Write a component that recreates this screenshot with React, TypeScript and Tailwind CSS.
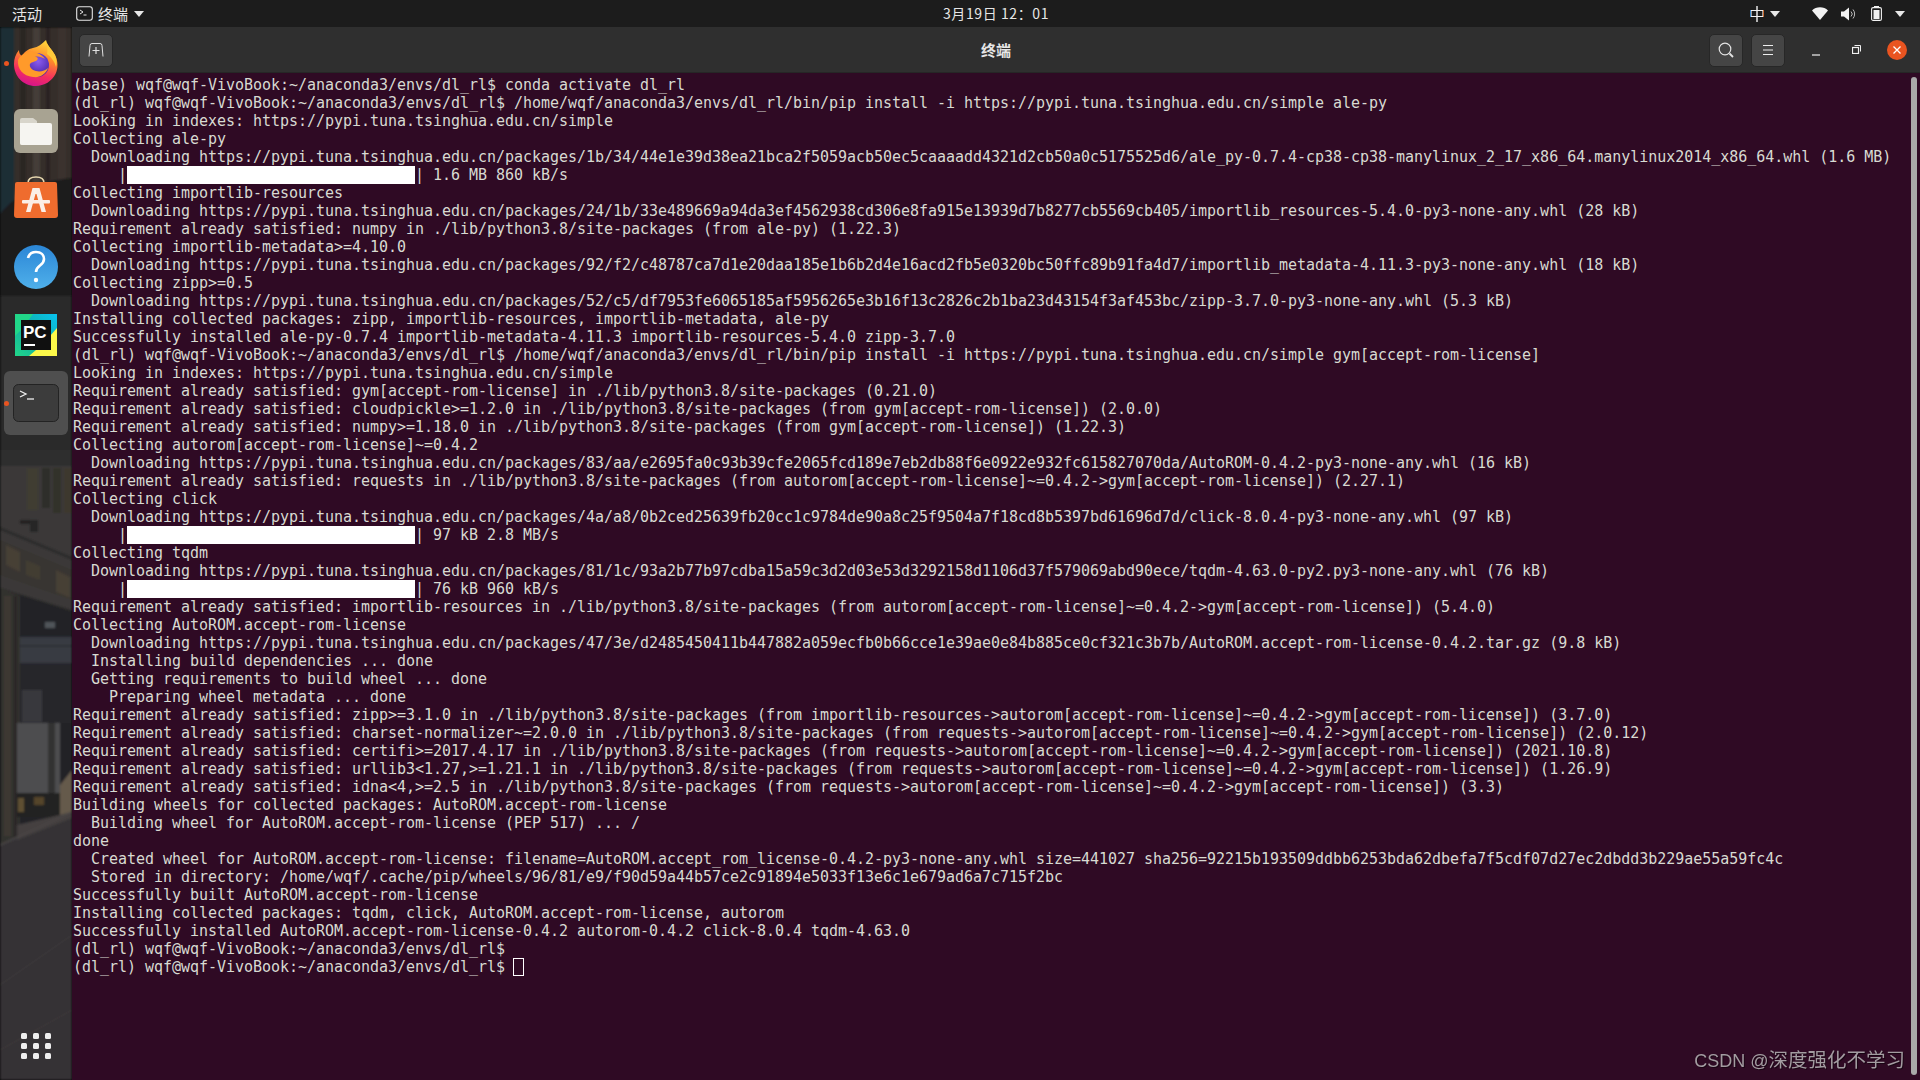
const lines: string[] = [
"(base) wqf@wqf-VivoBook:~/anaconda3/envs/dl_rl$ conda activate dl_rl",
"(dl_rl) wqf@wqf-VivoBook:~/anaconda3/envs/dl_rl$ /home/wqf/anaconda3/envs/dl_rl/bin/pip install -i https://pypi.tuna.tsinghua.edu.cn/simple ale-py",
"Looking in indexes: https://pypi.tuna.tsinghua.edu.cn/simple",
"Collecting ale-py",
"  Downloading https://pypi.tuna.tsinghua.edu.cn/packages/1b/34/44e1e39d38ea21bca2f5059acb50ec5caaaadd4321d2cb50a0c5175525d6/ale_py-0.7.4-cp38-cp38-manylinux_2_17_x86_64.manylinux2014_x86_64.whl (1.6 MB)",
"#| 1.6 MB 860 kB/s",
"Collecting importlib-resources",
"  Downloading https://pypi.tuna.tsinghua.edu.cn/packages/24/1b/33e489669a94da3ef4562938cd306e8fa915e13939d7b8277cb5569cb405/importlib_resources-5.4.0-py3-none-any.whl (28 kB)",
"Requirement already satisfied: numpy in ./lib/python3.8/site-packages (from ale-py) (1.22.3)",
"Collecting importlib-metadata>=4.10.0",
"  Downloading https://pypi.tuna.tsinghua.edu.cn/packages/92/f2/c48787ca7d1e20daa185e1b6b2d4e16acd2fb5e0320bc50ffc89b91fa4d7/importlib_metadata-4.11.3-py3-none-any.whl (18 kB)",
"Collecting zipp>=0.5",
"  Downloading https://pypi.tuna.tsinghua.edu.cn/packages/52/c5/df7953fe6065185af5956265e3b16f13c2826c2b1ba23d43154f3af453bc/zipp-3.7.0-py3-none-any.whl (5.3 kB)",
"Installing collected packages: zipp, importlib-resources, importlib-metadata, ale-py",
"Successfully installed ale-py-0.7.4 importlib-metadata-4.11.3 importlib-resources-5.4.0 zipp-3.7.0",
"(dl_rl) wqf@wqf-VivoBook:~/anaconda3/envs/dl_rl$ /home/wqf/anaconda3/envs/dl_rl/bin/pip install -i https://pypi.tuna.tsinghua.edu.cn/simple gym[accept-rom-license]",
"Looking in indexes: https://pypi.tuna.tsinghua.edu.cn/simple",
"Requirement already satisfied: gym[accept-rom-license] in ./lib/python3.8/site-packages (0.21.0)",
"Requirement already satisfied: cloudpickle>=1.2.0 in ./lib/python3.8/site-packages (from gym[accept-rom-license]) (2.0.0)",
"Requirement already satisfied: numpy>=1.18.0 in ./lib/python3.8/site-packages (from gym[accept-rom-license]) (1.22.3)",
"Collecting autorom[accept-rom-license]~=0.4.2",
"  Downloading https://pypi.tuna.tsinghua.edu.cn/packages/83/aa/e2695fa0c93b39cfe2065fcd189e7eb2db88f6e0922e932fc615827070da/AutoROM-0.4.2-py3-none-any.whl (16 kB)",
"Requirement already satisfied: requests in ./lib/python3.8/site-packages (from autorom[accept-rom-license]~=0.4.2->gym[accept-rom-license]) (2.27.1)",
"Collecting click",
"  Downloading https://pypi.tuna.tsinghua.edu.cn/packages/4a/a8/0b2ced25639fb20cc1c9784de90a8c25f9504a7f18cd8b5397bd61696d7d/click-8.0.4-py3-none-any.whl (97 kB)",
"#| 97 kB 2.8 MB/s",
"Collecting tqdm",
"  Downloading https://pypi.tuna.tsinghua.edu.cn/packages/81/1c/93a2b77b97cdba15a59c3d2d03e53d3292158d1106d37f579069abd90ece/tqdm-4.63.0-py2.py3-none-any.whl (76 kB)",
"#| 76 kB 960 kB/s",
"Requirement already satisfied: importlib-resources in ./lib/python3.8/site-packages (from autorom[accept-rom-license]~=0.4.2->gym[accept-rom-license]) (5.4.0)",
"Collecting AutoROM.accept-rom-license",
"  Downloading https://pypi.tuna.tsinghua.edu.cn/packages/47/3e/d2485450411b447882a059ecfb0b66cce1e39ae0e84b885ce0cf321c3b7b/AutoROM.accept-rom-license-0.4.2.tar.gz (9.8 kB)",
"  Installing build dependencies ... done",
"  Getting requirements to build wheel ... done",
"    Preparing wheel metadata ... done",
"Requirement already satisfied: zipp>=3.1.0 in ./lib/python3.8/site-packages (from importlib-resources->autorom[accept-rom-license]~=0.4.2->gym[accept-rom-license]) (3.7.0)",
"Requirement already satisfied: charset-normalizer~=2.0.0 in ./lib/python3.8/site-packages (from requests->autorom[accept-rom-license]~=0.4.2->gym[accept-rom-license]) (2.0.12)",
"Requirement already satisfied: certifi>=2017.4.17 in ./lib/python3.8/site-packages (from requests->autorom[accept-rom-license]~=0.4.2->gym[accept-rom-license]) (2021.10.8)",
"Requirement already satisfied: urllib3<1.27,>=1.21.1 in ./lib/python3.8/site-packages (from requests->autorom[accept-rom-license]~=0.4.2->gym[accept-rom-license]) (1.26.9)",
"Requirement already satisfied: idna<4,>=2.5 in ./lib/python3.8/site-packages (from requests->autorom[accept-rom-license]~=0.4.2->gym[accept-rom-license]) (3.3)",
"Building wheels for collected packages: AutoROM.accept-rom-license",
"  Building wheel for AutoROM.accept-rom-license (PEP 517) ... /",
"done",
"  Created wheel for AutoROM.accept-rom-license: filename=AutoROM.accept_rom_license-0.4.2-py3-none-any.whl size=441027 sha256=92215b193509ddbb6253bda62dbefa7f5cdf07d27ec2dbdd3b229ae55a59fc4c",
"  Stored in directory: /home/wqf/.cache/pip/wheels/96/81/e9/f90d59a44b57ce2c91894e5033f13e6c1e679ad6a7c715f2bc",
"Successfully built AutoROM.accept-rom-license",
"Installing collected packages: tqdm, click, AutoROM.accept-rom-license, autorom",
"Successfully installed AutoROM.accept-rom-license-0.4.2 autorom-0.4.2 click-8.0.4 tqdm-4.63.0",
"(dl_rl) wqf@wqf-VivoBook:~/anaconda3/envs/dl_rl$",
"(dl_rl) wqf@wqf-VivoBook:~/anaconda3/envs/dl_rl$ ^",
];

function Caret() {
  return <svg width="10" height="6" viewBox="0 0 10 6"><path d="M0 0h10L5 6z" fill="#e8e8e8" /></svg>;
}

function Wallpaper() {
  return (
    <svg className="absolute inset-0 w-full h-full" viewBox="0 27 72 1053" preserveAspectRatio="none">
      <defs><filter id="wb"><feGaussianBlur stdDeviation="0.9" /></filter></defs>
      <g filter="url(#wb)">
        <rect x="0" y="27" width="72" height="1053" fill="#2a2a2a" />
        <rect x="0" y="27" width="14" height="190" fill="#1c2e35" />
        <rect x="14" y="27" width="58" height="190" fill="#342e2b" />
        <rect x="20" y="27" width="6" height="170" fill="#2a2523" />
        <rect x="33" y="27" width="7" height="170" fill="#453c37" />
        <rect x="46" y="27" width="4" height="170" fill="#292422" />
        <rect x="58" y="27" width="8" height="170" fill="#3a322e" />
        <path d="M0 214C20 190 45 180 72 178V300H0z" fill="#1b1a1b" />
        <rect x="0" y="296" width="72" height="154" fill="#292929" />
        <rect x="0" y="450" width="72" height="16" fill="#2e2e2d" />
        <path d="M0 466H72V610L0 588z" fill="#3b3937" />
        <rect x="27" y="468" width="11" height="42" fill="#413c31" />
        <rect x="42" y="468" width="8" height="40" fill="#2e2d29" />
        <rect x="53" y="468" width="8" height="45" fill="#33312b" />
        <rect x="64" y="468" width="8" height="45" fill="#3c372d" />
        <rect x="20" y="520" width="18" height="4" fill="#232323" />
        <rect x="30" y="520" width="8" height="12" fill="#262626" />
        <path d="M0 527L72 557V560L0 530z" fill="#2c2c2c" />
        <path d="M0 540L72 570V600L0 575z" fill="#383633" />
        <path d="M6 545L20 552V572L6 565zM56 570L70 577V598L56 592z" fill="#474034" />
        <path d="M26 560L40 566V580L26 575z" fill="#423c31" />
        <path d="M20 595L72 612V830H20z" fill="#242427" />
        <rect x="20" y="637" width="52" height="26" fill="#383b43" />
        <rect x="20" y="645" width="52" height="2" fill="#2c2f36" />
        <rect x="45" y="622" width="10" height="6" fill="#50555a" />
        <rect x="20" y="663" width="52" height="60" fill="#28282b" />
        <rect x="22" y="690" width="20" height="32" fill="#39393c" />
        <path d="M0 588L20 596V880L0 880z" fill="#33302d" />
        <rect x="4" y="596" width="7" height="240" fill="#3e3933" />
        <rect x="14" y="596" width="3" height="280" fill="#292725" />
        <rect x="17" y="723" width="43" height="72" fill="#4d4e50" />
        <rect x="48" y="723" width="7" height="70" fill="#303032" />
        <rect x="17" y="793" width="43" height="24" fill="#212121" />
        <rect x="18" y="798" width="6" height="14" fill="#5f5030" />
        <rect x="34" y="797" width="10" height="8" fill="#55442c" />
        <path d="M60 785L72 770V818H60z" fill="#655a4c" />
        <path d="M0 845L72 812V1080H0z" fill="#363335" />
        <path d="M17 825L72 812V818L17 840z" fill="#444040" />
        <path d="M0 845L72 812" stroke="#4a4646" strokeWidth="1.500" />
        <path d="M0 985L72 935M0 1050L72 1010" stroke="#3e3a3c" strokeWidth="1" />
      </g>
    </svg>
  );
}

function Firefox() {
  return (
    <svg width="46" height="47" viewBox="0 0 46 47">
      <defs>
        <linearGradient id="ffb" x1="0.6" y1="0" x2="0.3" y2="1">
          <stop offset="0" stopColor="#ffd43b" />
          <stop offset="0.35" stopColor="#ff8a2a" />
          <stop offset="0.7" stopColor="#f52e5f" />
          <stop offset="1" stopColor="#d4128f" />
        </linearGradient>
        <radialGradient id="ffg" cx="0.55" cy="0.35" r="0.7">
          <stop offset="0" stopColor="#8a5cf0" />
          <stop offset="1" stopColor="#3e1d9c" />
        </radialGradient>
      </defs>
      <path d="M33 0c1 6 6 9 9 15 3 6 3.500 13 .5 19-3.500 7-11 12-20 12C10 46 1 36 1 24c0-5 1.500-10 5-14 0 3 1 5 3 6 2-4 6-7 11-8 5-1 9-4 13-8z" fill="url(#ffb)" />
      <circle cx="24" cy="25" r="12" fill="url(#ffg)" />
      <path d="M5 20c3-6 10-9 15-8 6 1 10 4 12 7-3-2-7-3-10-2 3 0 4 2 1 4-2 1-5 1-6 3-1 3 2 6 6 7 4 1 9 0 12-3-2 6-8 10-15 9C10 36 4 29 5 20z" fill="#ff9a2a" />
      <path d="M33 0c1 6 6 9 9 15 2 4 2 8 1 12-1-5-5-10-9-13 1-4 0-9-1-14z" fill="#ffc93a" />
    </svg>
  );
}

function Files() {
  return (
    <svg width="44" height="44" viewBox="0 0 44 44">
      <rect x="0" y="0" width="44" height="44" rx="6" fill="#a8a392" />
      <path d="M6 11a2 2 0 0 1 2-2h11l4 3v24H8a2 2 0 0 1-2-2z" fill="#d8d5cb" />
      <path d="M6 14h30a2 2 0 0 1 2 2v18a2 2 0 0 1-2 2H8a2 2 0 0 1-2-2z" fill="#f6f5f1" />
    </svg>
  );
}

function Store() {
  return (
    <svg className="-mt-[5px]" width="44" height="42" viewBox="0 0 44 42">
      <path d="M14 7c0-4 3-6 8-6s8 2 8 6" fill="none" stroke="#e8d8b0" strokeWidth="1.600" />
      <path d="M3 6h38a2 2 0 0 1 2 2l1 31a3 3 0 0 1-3 3H3a3 3 0 0 1-3-3L1 8a2 2 0 0 1 2-2z" fill="#ef6c2e" />
      <path d="M18.500 12h7l6.500 24h-4.500l-5-18h-1l-5 18H12z" fill="#fbeee6" />
      <rect x="8" y="24" width="28" height="3.500" rx="1" fill="#fbeee6" />
    </svg>
  );
}

function Help() {
  return (
    <div className="w-[44px] h-[44px] rounded-full bg-gradient-to-b from-[#2b86d6] to-[#4fb0ea] flex items-center justify-center">
      <svg width="20" height="34" viewBox="0 0 20 34">
        <path d="M2 8c1-4 4-6 8-6 5 0 8 3 8 7 0 3-2 5-4 6.500-2 1.500-4 3-4 6.500" fill="none" stroke="#fff" strokeWidth="2.600" />
        <circle cx="10" cy="30" r="2.200" fill="#fff" />
      </svg>
    </div>
  );
}

function PyCharm() {
  return (
    <svg width="42" height="42" viewBox="0 0 42 42">
      <defs>
        <linearGradient id="pc1" x1="0" y1="1" x2="1" y2="0">
          <stop offset="0" stopColor="#21d789" />
          <stop offset="0.45" stopColor="#12b0a0" />
          <stop offset="1" stopColor="#07c3f2" />
        </linearGradient>
      </defs>
      <rect width="42" height="42" fill="url(#pc1)" />
      <path d="M42 14V42H14L28 30z" fill="#fcf84a" />
      <path d="M0 0h18L8 14 0 22z" fill="#21d789" />
      <rect x="6" y="6" width="30" height="30" fill="#101010" />
      <text x="8" y="24" fill="#fff" fontSize="17" fontWeight="700" fontFamily="'Liberation Sans', sans-serif">PC</text>
      <rect x="9" y="30" width="11" height="2" fill="#fff" />
    </svg>
  );
}

function Term() {
  return (
    <svg width="46" height="38" viewBox="0 0 46 38">
      <rect x="0.500" y="0.500" width="45" height="37" rx="5" fill="#3c3c3c" stroke="#232323" />
      <path d="M7 7l6 3-6 3" fill="none" stroke="#f0f0f0" strokeWidth="1.300" />
      <path d="M14 15h7" stroke="#f0f0f0" strokeWidth="1.300" />
    </svg>
  );
}

function Dot() {
  return <span className="absolute left-[4px] top-1/2 -mt-[2.500px] w-[5px] h-[5px] rounded-full bg-[#e95420]" />;
}

function HeaderButton({ children }: { children: React.ReactNode }) {
  return (
    <div className="w-[34px] h-[33px] rounded-[5px] bg-[#454545] border border-[#272727] flex items-center justify-center">
      {children}
    </div>
  );
}

function Slot({ children, dot }: { children: React.ReactNode; dot?: boolean }) {
  return (
    <div className="relative h-[68px] w-[72px] flex items-center justify-center">
      {children}
      {dot && <Dot />}
    </div>
  );
}

export default function App() {
  return (
    <div className="w-[1920px] h-[1080px] flex flex-col overflow-hidden bg-black font-['Noto_Sans_CJK_SC','Noto_Sans',sans-serif]">
      <div className="h-[27px] shrink-0 bg-[#1c1c1c] text-[#e6e6e6] flex items-center text-[15px] relative">
        <div className="w-[1920px] grid grid-cols-[1fr_auto_1fr] items-center">
          <div className="flex items-center pl-[12px]">
            <span className="leading-[27px]">活动</span>
            <svg className="ml-[34px]" width="17" height="15" viewBox="0 0 17 15">
              <rect x="0.700" y="0.700" width="15.600" height="13.600" rx="2.500" fill="none" stroke="#e6e6e6" strokeWidth="1.100" />
              <path d="M4 4l3 2-3 2M7.500 9h3" fill="none" stroke="#e6e6e6" strokeWidth="1" />
            </svg>
            <span className="ml-[5px] leading-[27px]">终端</span>
            <span className="ml-[6px] flex"><Caret /></span>
          </div>
          <div className="text-[14px] tracking-[0.6px] leading-[27px] pl-[72px]">3月19日 12：01</div>
          <div className="flex items-center justify-end pr-[15px]">
            <svg width="14" height="16" viewBox="0 0 14 16">
              <path d="M1 4.500h12v6H1z" fill="none" stroke="#f2f2f2" strokeWidth="1.200" />
              <path d="M7 0v16" stroke="#f2f2f2" strokeWidth="1.400" />
              <path d="M0.500 4v7" stroke="#3a8ad0" strokeWidth="1" />
              <path d="M13.500 4v7" stroke="#c86a30" strokeWidth="1" />
            </svg>
            <span className="ml-[6px] flex"><Caret /></span>
            <svg className="ml-[32px]" width="16" height="13" viewBox="0 0 16 13"><path d="M0 3.500C4-.8 12-.8 16 3.500L8 13z" fill="#f2f2f2" /></svg>
            <svg className="ml-[13px]" width="15" height="14" viewBox="0 0 15 14">
              <path d="M0 4.500h3L8 .500v13L3 9.500H0z" fill="#f2f2f2" />
              <path d="M10 4.500a3.500 3.500 0 0 1 0 5M12 2.500a7 7 0 0 1 0 9" fill="none" stroke="#bdbdbd" strokeWidth="1" />
            </svg>
            <svg className="ml-[15px]" width="11" height="15" viewBox="0 0 11 15">
              <rect x="3" y="0" width="5" height="2" fill="#f2f2f2" />
              <rect x="0.600" y="1.600" width="9.800" height="12.800" rx="1.500" fill="none" stroke="#f2f2f2" strokeWidth="1.100" />
              <rect x="2.500" y="4" width="6" height="9" fill="#f2f2f2" />
            </svg>
            <span className="ml-[13px] flex"><Caret /></span>
          </div>
        </div>
      </div>

      <div className="flex-1 flex min-h-0">
        <div className="relative w-[72px] shrink-0 flex flex-col">
          <Wallpaper />
          <div className="relative flex-1 flex flex-col pt-[2px]">
            <Slot dot><Firefox /></Slot>
            <Slot><Files /></Slot>
            <Slot><Store /></Slot>
            <Slot><Help /></Slot>
            <Slot><PyCharm /></Slot>
            <Slot dot>
              <div className="w-[64px] h-[64px] rounded-[6px] bg-[#4f4f4f] flex items-center justify-center">
                <Term />
              </div>
            </Slot>
            <div className="mt-auto mb-[21px] mx-auto grid grid-cols-3 gap-x-[6px] gap-y-[4px]">
              {Array.from({ length: 9 }).map((_, i) => (
                <span key={i} className="w-[6px] h-[6px] rounded-[1.500px] bg-[#eeeeee]" />
              ))}
            </div>
          </div>
        </div>

        <div className="flex-1 flex flex-col min-w-0">
          <div className="h-[46px] shrink-0 bg-[#2f2f2f] border-b border-[#262626] grid grid-cols-[1fr_auto_1fr] items-center text-[#e6e6e6]">
            <div className="pl-[7px] flex">
              <HeaderButton>
                <svg width="16" height="14" viewBox="0 0 16 14">
                  <path d="M1 13.500L2 2.500a2 2 0 0 1 2-2h8a2 2 0 0 1 2 2l1 11" fill="none" stroke="#e0e0e0" strokeWidth="1" />
                  <path d="M8 4v7M4.500 7.500h7" stroke="#e0e0e0" strokeWidth="1.200" />
                </svg>
              </HeaderButton>
            </div>
            <div className="text-[15px] font-bold leading-[46px]">终端</div>
            <div className="flex items-center justify-end pr-[12px]">
              <HeaderButton>
                <svg width="16" height="16" viewBox="0 0 16 16" fill="none" stroke="#e4e4e4">
                  <circle cx="7" cy="7" r="5.800" strokeWidth="1.200" />
                  <path d="M11.500 11.500L15 15" strokeWidth="1.800" />
                </svg>
              </HeaderButton>
              <div className="ml-[8px]">
                <HeaderButton>
                  <svg width="12" height="12" viewBox="0 0 12 12"><path d="M1 1.500h10M1 6h10M1 10.500h10" stroke="#eeeeee" strokeWidth="1.100" /></svg>
                </HeaderButton>
              </div>
              <svg className="ml-[27px] mt-[4px]" width="8" height="8" viewBox="0 0 8 8"><path d="M0 7h8" stroke="#f0f0f0" strokeWidth="1.200" /></svg>
              <svg className="ml-[32px] -mt-[1px]" width="9" height="9" viewBox="0 0 9 9" fill="none" stroke="#f0f0f0" strokeWidth="1">
                <rect x="0.500" y="2.500" width="6" height="6" strokeWidth="1.200" /><path d="M2.500 .500h6v6" />
              </svg>
              <div className="ml-[26px] mr-[1px] w-[20px] h-[20px] rounded-full bg-[#e95420] flex items-center justify-center">
                <svg width="8" height="8" viewBox="0 0 8 8"><path d="M0.500 0.500l7 7M7.500 0.500l-7 7" stroke="#fff" strokeWidth="1.300" /></svg>
              </div>
            </div>
          </div>

          <div className="relative flex-1 bg-[#2f0a24] pt-[3px] pl-[1px] text-[#d8dad2] font-['DejaVu_Sans_Mono',monospace] text-[15px] leading-[18px] tracking-[-0.03px]">
            {lines.map((l, i) => {
              if (l.startsWith("#")) {
                return (
                  <div key={i} className="h-[18px] whitespace-pre">
                    {"     |"}
                    <span className="inline-block w-[288px] h-[18px] bg-white align-top" />
                    {l.slice(1)}
                  </div>
                );
              }
              if (l.endsWith("^")) {
                return (
                  <div key={i} className="h-[18px] whitespace-pre">
                    {l.slice(0, -1)}
                    <span className="inline-block -ml-[1px] w-[11px] h-[18px] border border-white align-top" />
                  </div>
                );
              }
              return <div key={i} className="h-[18px] whitespace-pre">{l}</div>;
            })}
            <div className="absolute right-[3px] top-[4px] bottom-[5px] w-[6px] rounded-full bg-[#a9a9a9]" />
            <div className="absolute right-[15px] bottom-[6px] leading-[26px] whitespace-pre text-[#a39ca1] font-['Liberation_Sans','Noto_Sans_CJK_SC',sans-serif] text-[18px] tracking-normal drop-shadow-[1px_1px_0_#1a0514]">
              CSDN @<span className="text-[19.500px] font-['Noto_Sans_CJK_SC',sans-serif]">深度强化不学习</span>
            </div>
          </div>
        </div>
      </div>
    </div>
  );
}
